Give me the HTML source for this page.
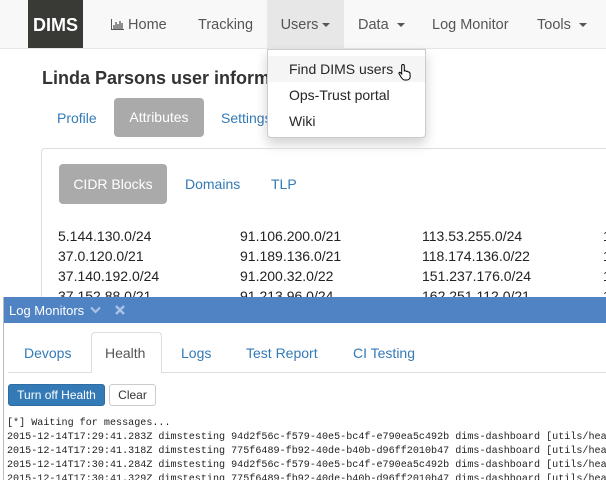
<!DOCTYPE html>
<html><head><style>
*{margin:0;padding:0;box-sizing:border-box}
body{width:606px;height:480px;overflow:hidden;background:#fff;font-family:"Liberation Sans",sans-serif;font-size:14px;color:#333;position:relative}
.a{position:absolute;white-space:nowrap}
.nav{position:absolute;left:0;top:0;width:606px;height:49px;background:#f8f8f8;border-bottom:1px solid #e7e7e7}
.nl{position:absolute;top:0;height:48px;line-height:50px;color:#555;font-size:14.5px}
.car{display:inline-block;width:0;height:0;border-left:4px solid transparent;border-right:4px solid transparent;border-top:4px solid #555;vertical-align:middle;margin-left:4px}
.blue{color:#337ab7}
.mono{font-family:"Liberation Mono",monospace;font-size:10.1px;color:#222;line-height:14px}
</style></head><body>
<div class="nav">
<div class="nl" style="left:28px;width:55px;background:#393a35;color:#fff;font-weight:bold;font-size:18px;text-align:center">DIMS</div>
<div class="nl" style="left:111px"><svg width="13" height="11" viewBox="0 0 13 11" style="vertical-align:-1px"><path d="M0.5 0v10.5H13" stroke="#555" fill="none"/><path d="M3 6v4M5 3v7M7 5v5M9 2v8M11 4v6" stroke="#555" stroke-width="1.3"/></svg> Home</div>
<div class="nl" style="left:198px">Tracking</div>
<div class="nl" style="left:267px;width:77px;background:#e7e7e7;text-align:center">Users<span class="car"></span></div>
<div class="nl" style="left:358px">Data <span class="car"></span></div>
<div class="nl" style="left:432px">Log Monitor</div>
<div class="nl" style="left:537px">Tools <span class="car"></span></div>
</div>
<div class="a" style="left:42px;top:68px;font-size:18px;font-weight:bold;color:#333">Linda Parsons user information</div>
<div class="a blue" style="left:57px;top:110px">Profile</div>
<div class="a" style="left:114px;top:98px;width:90px;height:39px;background:#aaa;border-radius:4px;color:#fff;text-align:center;line-height:39px">Attributes</div>
<div class="a blue" style="left:221px;top:110px">Settings</div>
<div class="a" style="left:267px;top:49px;width:159px;height:89px;background:#fff;border:1px solid #ccc;border-radius:0 0 4px 4px;box-shadow:0 6px 12px rgba(0,0,0,.18)">
<div style="position:absolute;left:0;top:6px;width:157px;height:26px;background:#f5f5f5"></div>
<div class="a" style="left:21px;top:11px;color:#262626">Find DIMS users</div>
<div class="a" style="left:21px;top:37px;color:#262626">Ops-Trust portal</div>
<div class="a" style="left:21px;top:63px;color:#262626">Wiki</div>
<svg class="a" style="left:130px;top:13px" width="16" height="18" viewBox="0 0 16 18"><path d="M5 1.5c.8 0 1.3.5 1.3 1.3V8l.3-.1c.7-.3 1.5 0 1.8.5.7-.3 1.5 0 1.8.6.7-.2 1.5.2 1.7.9l.3 3.5c0 1.5-1 3.6-3 3.6H6.5C5 17 4 15.5 3 14L1 10.5c-.4-.8.5-1.5 1.3-1L3.7 11V2.8C3.7 2 4.2 1.5 5 1.5z" fill="#fff" stroke="#000" stroke-width="1"/></svg>
</div>
<div class="a" style="left:41px;top:148px;width:580px;height:160px;border:1px solid #ddd;border-radius:4px"></div>
<div class="a" style="left:59px;top:164px;width:108px;height:40px;background:#aaa;border-radius:4px;color:#fff;text-align:center;line-height:40px">CIDR Blocks</div>
<div class="a blue" style="left:185px;top:176px">Domains</div>
<div class="a blue" style="left:271px;top:176px">TLP</div>
<div class="a" style="left:58px;top:226px;line-height:20px;color:#222">5.144.130.0/24<br>37.0.120.0/21<br>37.140.192.0/24<br>37.152.88.0/21</div>
<div class="a" style="left:240px;top:226px;line-height:20px;color:#222">91.106.200.0/21<br>91.189.136.0/21<br>91.200.32.0/22<br>91.213.96.0/24</div>
<div class="a" style="left:422px;top:226px;line-height:20px;color:#222">113.53.255.0/24<br>118.174.136.0/22<br>151.237.176.0/24<br>162.251.112.0/21</div>
<div class="a" style="left:603px;top:226px;line-height:20px;color:#222;width:3px;overflow:hidden">1<br>1<br>1<br>1</div>
<div class="a" style="left:3px;top:297px;width:603px;height:183px;background:#fff;border-left:1px solid #bbb;overflow:hidden">
<div style="position:absolute;left:0;top:0;width:603px;height:26px;background:#5083c4"></div>
<div class="a" style="left:5px;top:6px;color:#fff;font-size:13px">Log Monitors</div>
<svg class="a" style="left:86px;top:9px" width="11" height="8" viewBox="0 0 11 8"><path d="M1 1.5l4.5 4.5 4.5-4.5" stroke="#a9c3e6" stroke-width="2.2" fill="none"/></svg>
<svg class="a" style="left:111px;top:8px" width="10" height="10" viewBox="0 0 10 10"><path d="M1 1l8 8M9 1l-8 8" stroke="#a9c3e6" stroke-width="2.4"/></svg>
<div style="position:absolute;left:4px;top:75px;width:600px;border-top:1px solid #ddd"></div>
<div style="position:absolute;left:87px;top:35px;width:71px;height:41px;background:#fff;border:1px solid #ddd;border-bottom:none;border-radius:4px 4px 0 0"></div>
<div class="a blue" style="left:20px;top:48px">Devops</div>
<div class="a" style="left:101px;top:48px;color:#555">Health</div>
<div class="a blue" style="left:177px;top:48px">Logs</div>
<div class="a blue" style="left:242px;top:48px">Test Report</div>
<div class="a blue" style="left:349px;top:48px">CI Testing</div>
<div class="a" style="left:4px;top:87px;width:97px;height:22px;background:#337ab7;border:1px solid #2e6da4;border-radius:3px;color:#fff;font-size:12px;text-align:center;line-height:20px">Turn off Health</div>
<div class="a" style="left:105px;top:87px;width:47px;height:22px;background:#fff;border:1px solid #ccc;border-radius:3px;font-size:12px;text-align:center;line-height:20px">Clear</div>
<div class="a mono" style="left:3px;top:120px">[*] Waiting for messages...<br>2015-12-14T17:29:41.283Z dimstesting 94d2f56c-f579-40e5-bc4f-e790ea5c492b dims-dashboard [utils/healt<br>2015-12-14T17:29:41.318Z dimstesting 775f6489-fb92-40de-b40b-d96ff2010b47 dims-dashboard [utils/healt<br>2015-12-14T17:30:41.284Z dimstesting 94d2f56c-f579-40e5-bc4f-e790ea5c492b dims-dashboard [utils/healt<br>2015-12-14T17:30:41.329Z dimstesting 775f6489-fb92-40de-b40b-d96ff2010b47 dims-dashboard [utils/healt</div>
</div>
</body></html>
